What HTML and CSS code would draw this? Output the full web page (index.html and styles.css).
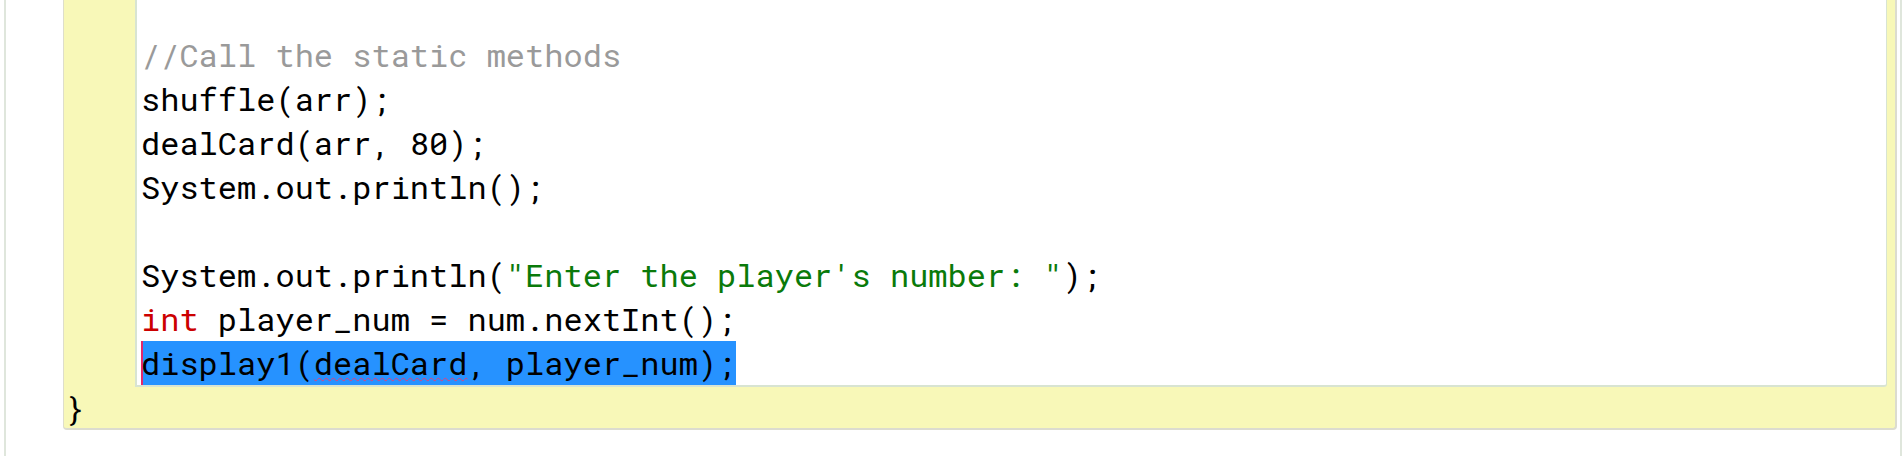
FILE: index.html
```html
<!DOCTYPE html>
<html lang="en">
<head>
<meta charset="utf-8">
<title>Code block</title>
<link rel="stylesheet" href="styles.css">
</head>
<body>
<div class="frame">
  <div class="block">
    <div class="gutter"></div>
    <div class="code">
      <div class="line">&nbsp;</div>
      <div class="line"><span class="cm">//Call the static methods</span></div>
      <div class="line">shuffle(arr);</div>
      <div class="line">dealCard(arr, 80);</div>
      <div class="line">System.out.println();</div>
      <div class="line">&nbsp;</div>
      <div class="line">System.out.println(<span class="str">"Enter the player's number: "</span>);</div>
      <div class="line"><span class="kw">int</span> player_num = num.nextInt();</div>
      <div class="line"><span class="sel">display1(<span class="typo">dealCard</span>, player_num);</span></div>
    </div>
    <div class="close">}</div>
  </div>
</div>
</body>
</html>
```

FILE: styles.css
```css
html, body {
  margin: 0;
  padding: 0;
  background: #ffffff;
}

body {
  height: 456px;
  overflow: hidden;
  font-family: "Roboto Mono", "DejaVu Sans Mono", "Liberation Mono", monospace;
  font-size: 32px;
  color: #000000;
}

.frame {
  display: flex;
  flex-direction: column;
  height: 456px;
  margin: 0 2px 0 4px;
  padding: 0 3px 0 57px;
  border-left: 2px solid #dfe6dc;
  border-right: 2px solid #dfe6dc;
  overflow: hidden;
}

.block {
  margin-top: -11px;
  display: grid;
  grid-template-columns: 71px 1fr;
  padding: 0 8px 0 0;
  background: #f8f8b8;
  border-left: 1px solid #dedecb;
  border-right: 2px solid #dcdccf;
  border-bottom: 2px solid #dcdccf;
  border-radius: 0 0 4px 4px;
}

.gutter {
  background: #f8f8b8;
}

.code {
  background: #ffffff;
  padding-left: 4px;
  border-left: 2px solid #d8e4d2;
  border-right: 1px solid #d8e4d2;
  border-bottom: 2px solid #d8e4d2;
  border-bottom-right-radius: 3px;
}

.line {
  height: 44px;
  line-height: 44px;
  white-space: pre;
}

.cm {
  color: #9a9a9a;
}

.str {
  color: #0a7a0a;
}

.kw {
  color: #cc0000;
}

.sel {
  display: inline-block;
  height: 44px;
  background: #2692ff;
  box-shadow: inset 2px 0 0 #e2276c;
}

.typo {
  text-decoration: underline wavy #e0407a;
  text-decoration-thickness: 1px;
  text-decoration-skip-ink: none;
  text-underline-offset: 2px;
}

.close {
  grid-column: 1 / -1;
  height: 41px;
  line-height: 41px;
  padding-left: 1px;
}
```
